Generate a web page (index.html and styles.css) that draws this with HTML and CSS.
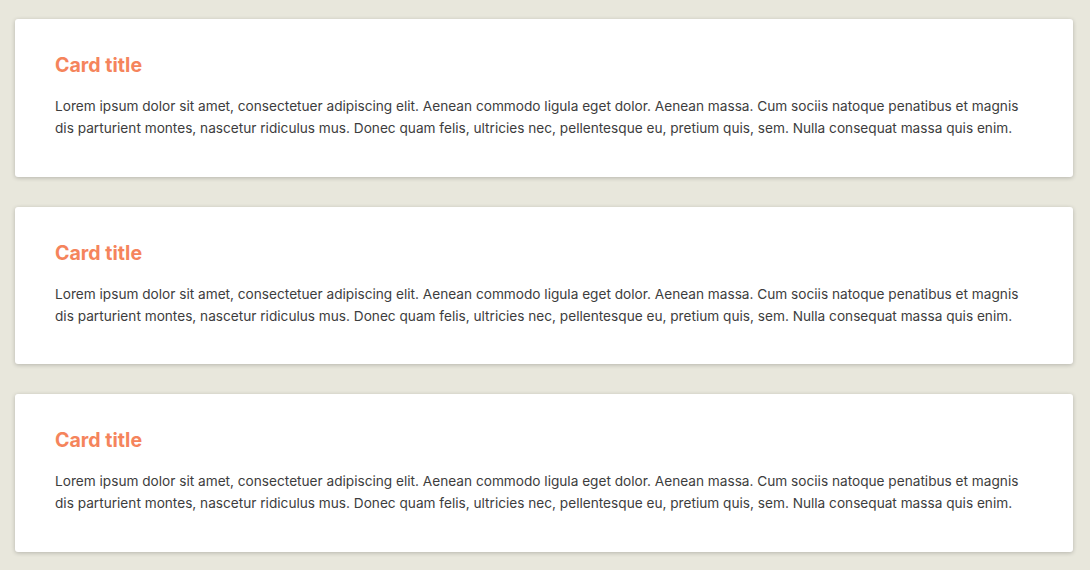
FILE: index.html
```html
<!DOCTYPE html>
<html lang="en">
<head>
<meta charset="utf-8">
<title>Cards</title>
<link rel="stylesheet" href="styles.css">
</head>
<body>
<main class="cards">
  <article class="card">
    <h2 class="card-title">Card title</h2>
    <p class="card-text">Lorem ipsum dolor sit amet, consectetuer adipiscing elit. Aenean commodo ligula eget dolor. Aenean massa. Cum sociis natoque penatibus et magnis dis parturient montes, nascetur ridiculus mus. Donec quam felis, ultricies nec, pellentesque eu, pretium quis, sem. Nulla consequat massa quis enim.</p>
  </article>
  <article class="card">
    <h2 class="card-title">Card title</h2>
    <p class="card-text">Lorem ipsum dolor sit amet, consectetuer adipiscing elit. Aenean commodo ligula eget dolor. Aenean massa. Cum sociis natoque penatibus et magnis dis parturient montes, nascetur ridiculus mus. Donec quam felis, ultricies nec, pellentesque eu, pretium quis, sem. Nulla consequat massa quis enim.</p>
  </article>
  <article class="card">
    <h2 class="card-title">Card title</h2>
    <p class="card-text">Lorem ipsum dolor sit amet, consectetuer adipiscing elit. Aenean commodo ligula eget dolor. Aenean massa. Cum sociis natoque penatibus et magnis dis parturient montes, nascetur ridiculus mus. Donec quam felis, ultricies nec, pellentesque eu, pretium quis, sem. Nulla consequat massa quis enim.</p>
  </article>
</main>
</body>
</html>
```
FILE: styles.css
```css
html, body {
  margin: 0;
  padding: 0;
}
body {
  background: #e8e7dc;
  font-family: Inter, "Noto Sans", sans-serif;
}
.cards {
  display: flex;
  flex-direction: column;
  gap: 30px;
  padding: 19px 17px 19px 15px;
}
.card {
  background: #ffffff;
  border-radius: 3px;
  box-shadow: 0 1px 4px rgba(0, 0, 0, 0.22);
  padding: 34px 40px 37.5px 40px;
}
.card-title {
  margin: 0 0 18px 0;
  font-size: 19.6px;
  line-height: 24px;
  font-weight: 700;
  color: #f5845c;
}
.card-text {
  margin: 0;
  font-size: 13.65px;
  line-height: 22px;
  color: #3d3d3d;
}
```
